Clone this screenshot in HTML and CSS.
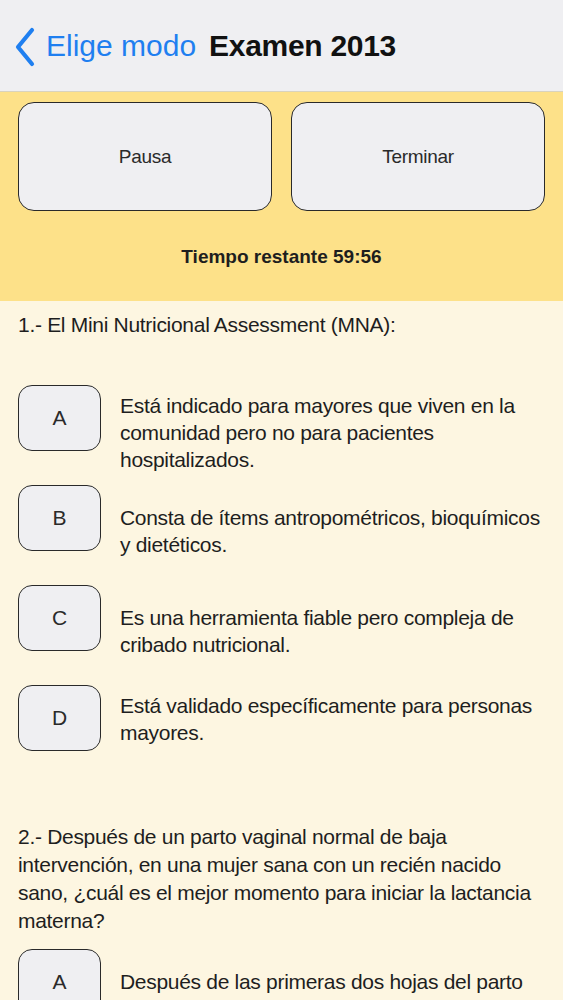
FILE: index.html
```html
<!DOCTYPE html>
<html lang="es">
<head>
    <meta charset="UTF-8">
    <meta name="viewport" content="width=device-width, initial-scale=1.0">
    <title>Examen 2013</title>
    <link rel="stylesheet" href="styles.css">
</head>
<body>
    <div class="nav-bar">
        <a class="back" href="#">
            <svg class="chevron" width="22" height="40" viewBox="0 0 22 40">
                <path d="M18 3 L4 20 L18 37" fill="none" stroke="#1f7ff0" stroke-width="4.2" stroke-linecap="round" stroke-linejoin="round"/>
            </svg>
            <span>Elige modo</span>
        </a>
        <h1>Examen 2013</h1>
    </div>

    <div class="exam-panel">
        <div class="controls">
            <button>Pausa</button>
            <button>Terminar</button>
        </div>
        <div class="timer">Tiempo restante 59:56</div>
    </div>

    <div class="questions">
        <div class="question first">
            <p class="question-text">1.- El Mini Nutricional Assessment (MNA):</p>
            <div class="options">
                <div class="option">
                    <div class="letter">A</div>
                    <div class="option-text top">Está indicado para mayores que viven en la comunidad pero no para pacientes hospitalizados.</div>
                </div>
                <div class="option">
                    <div class="letter">B</div>
                    <div class="option-text">Consta de ítems antropométricos, bioquímicos y dietéticos.</div>
                </div>
                <div class="option">
                    <div class="letter">C</div>
                    <div class="option-text">Es una herramienta fiable pero compleja de cribado nutricional.</div>
                </div>
                <div class="option">
                    <div class="letter">D</div>
                    <div class="option-text top">Está validado específicamente para personas mayores.</div>
                </div>
            </div>
        </div>

        <div class="question second">
            <p class="question-text">2.- Después de un parto vaginal normal de baja intervención, en una mujer sana con un recién nacido sano, ¿cuál es el mejor momento para iniciar la lactancia materna?</p>
            <div class="options">
                <div class="option">
                    <div class="letter">A</div>
                    <div class="option-text">Después de las primeras dos hojas del parto</div>
                </div>
            </div>
        </div>
    </div>
</body>
</html>
```

FILE: styles.css
```css
body {
    margin: 0;
    background: #fdf6e1;
    font-family: "Liberation Sans", Arial, sans-serif;
    color: #1e1e1e;
    overflow: hidden;
}

.nav-bar {
    height: 92px;
    background: #efeff2;
    border-bottom: 1px solid #d9d3bd;
    display: flex;
    align-items: center;
    padding: 0 14px;
    box-sizing: border-box;
}

.back {
    display: flex;
    align-items: center;
    gap: 10px;
    color: #1f7ff0;
    text-decoration: none;
    font-size: 30px;
    letter-spacing: 0;
}

.chevron {
    margin-top: 2px;
}

.nav-bar h1 {
    margin: 0 0 0 13px;
    font-size: 30px;
    font-weight: bold;
    color: #111;
    letter-spacing: -0.3px;
}

.exam-panel {
    background: #fde189;
    padding: 10px 18px 0;
    height: 209px;
    box-sizing: border-box;
}

.controls {
    display: grid;
    grid-template-columns: 1fr 1fr;
    gap: 19px;
}

button {
    height: 109px;
    background: #efeff2;
    border: 1.5px solid #2a2a2a;
    border-radius: 16px;
    font-family: "Liberation Sans", Arial, sans-serif;
    font-size: 19px;
    color: #2a2a2a;
    letter-spacing: -0.3px;
}

.timer {
    text-align: center;
    font-weight: bold;
    font-size: 19px;
    letter-spacing: 0;
    margin-top: 35px;
}

.questions {
    padding: 10px 18px 0;
}

.question-text {
    margin: 0;
    font-size: 21px;
    line-height: 28px;
    letter-spacing: -0.3px;
}

.first .options {
    margin-top: 46px;
}

.second {
    margin-top: 38px;
}

.second .options {
    margin-top: 14px;
}

.option {
    display: flex;
    gap: 19px;
    height: 100px;
}

.letter {
    flex: none;
    width: 83px;
    height: 66px;
    box-sizing: border-box;
    background: #efeff2;
    border: 1.5px solid #2a2a2a;
    border-radius: 14px;
    display: flex;
    align-items: center;
    justify-content: center;
    font-size: 21px;
    color: #2a2a2a;
}

.option-text {
    font-size: 21px;
    line-height: 27px;
    letter-spacing: -0.3px;
    padding-top: 19px;
}

.option-text.top {
    padding-top: 7px;
}
```
